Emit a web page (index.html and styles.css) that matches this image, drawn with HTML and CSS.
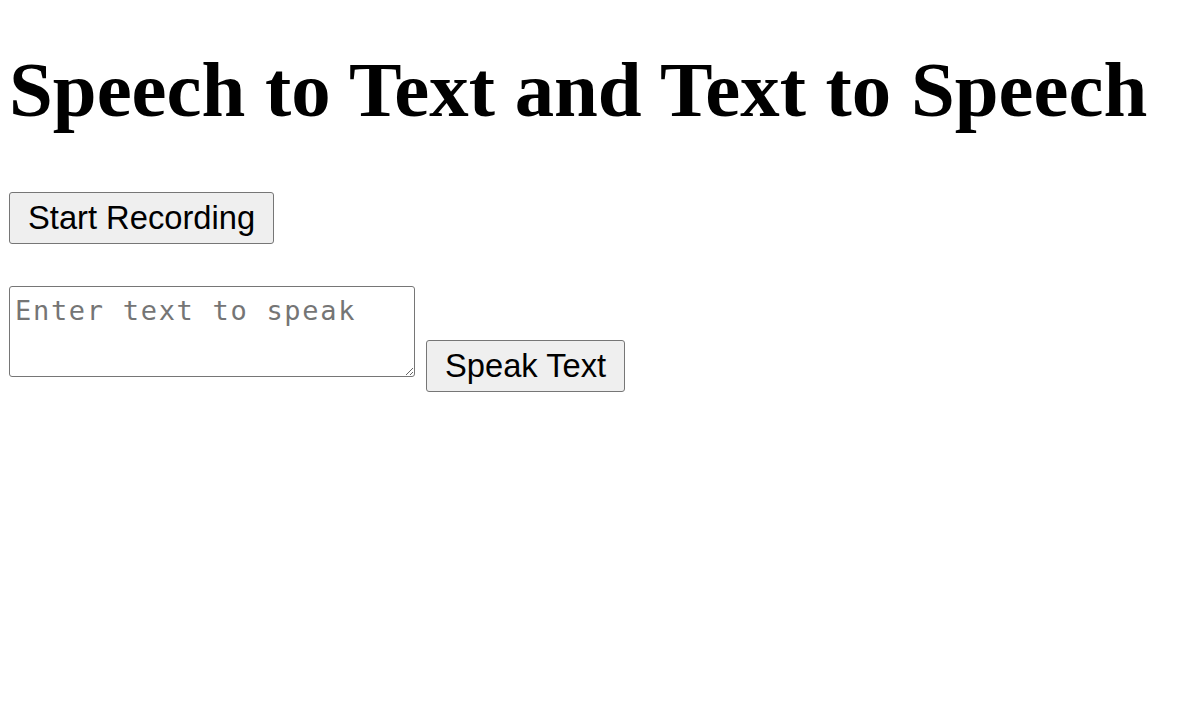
FILE: index.html
```html
<!DOCTYPE html>
<html lang="en">
<head>
<meta charset="utf-8">
<title>Speech to Text and Text to Speech</title>
<link rel="stylesheet" href="styles.css">
</head>
<body>
<h1 class="title">Speech to Text and Text to Speech</h1>
<div class="record-row"><button class="btn" type="button">Start Recording</button></div>
<div class="speak-row"><textarea class="speak-input" placeholder="Enter text to speak"></textarea><button class="btn btn-speak" type="button">Speak Text</button></div>
</body>
</html>
```
FILE: styles.css
```css
html, body {
  margin: 0;
  background: #ffffff;
}

body {
  padding: 0 0 0 9px;
  font-family: "Liberation Serif", serif;
  color: #000;
}

.title {
  margin: 47px 0 0 0;
  font-family: "Liberation Serif", serif;
  font-weight: bold;
  font-size: 78.8px;
  line-height: 86px;
  white-space: nowrap;
}

.record-row {
  margin-top: 59px;
  font-size: 0;
  line-height: 0;
}

.btn {
  font-family: "Liberation Sans", Arial, sans-serif;
  font-size: 32.7px;
  line-height: 36px;
  padding: 7px 18px;
  margin: 0;
  border: 1px solid #767676;
  border-radius: 3px;
  background: #efefef;
  color: #000;
  vertical-align: baseline;
}

.speak-row {
  margin-top: 42px;
  font-size: 0;
}

.speak-input {
  box-sizing: border-box;
  width: 406px;
  height: 91px;
  margin: 0;
  padding: 6px 5px 5px 5px;
  border: 1px solid #767676;
  border-radius: 3px;
  font-family: "DejaVu Sans Mono", monospace;
  font-size: 27px;
  line-height: 35px;
  letter-spacing: 1.7px;
  color: #000;
  vertical-align: baseline;
}

.speak-input::placeholder {
  color: #757575;
}

.btn-speak {
  margin-left: 11px;
}
```
